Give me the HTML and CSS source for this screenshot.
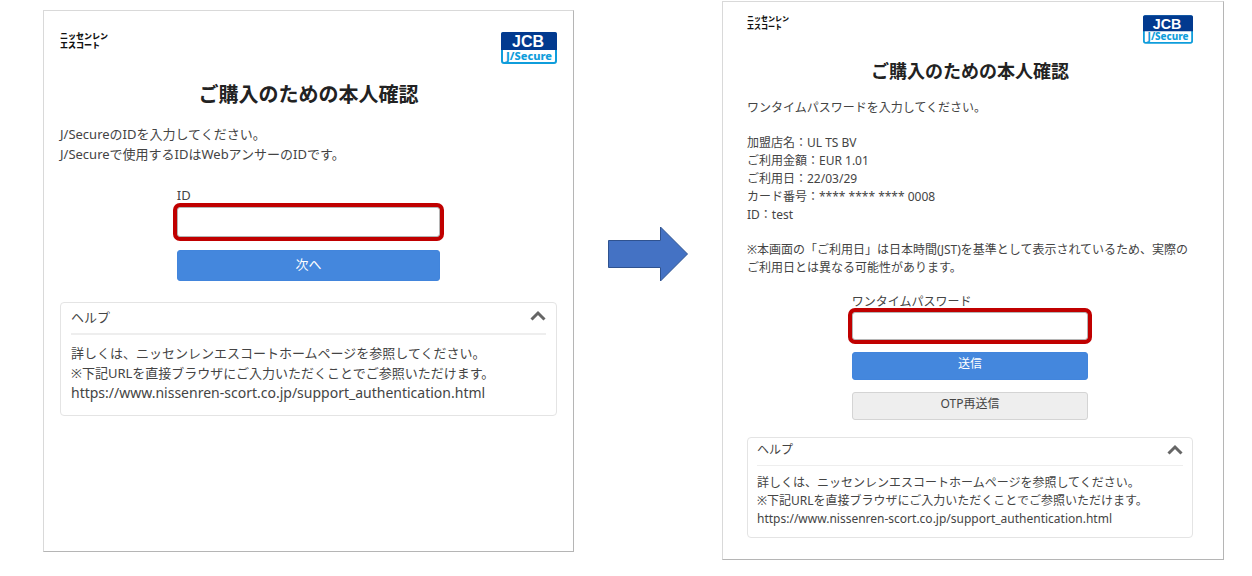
FILE: index.html
```html
<!DOCTYPE html>
<html lang="ja">
<head>
    <meta charset="UTF-8">
    <meta name="viewport" content="width=device-width, initial-scale=1.0">
    <title>ご購入のための本人確認</title>
    <link rel="stylesheet" href="styles.css">
</head>
<body>
    <main class="flow">
        <!-- Step 1: ID -->
        <section class="card">
            <div class="card-header">
                <svg class="brand" viewBox="0 0 48 20" role="img" aria-label="ニッセンレンエスコート">
                    <text x="0" y="7">ニッセンレン</text>
                    <text x="0" y="16">エスコート</text>
                </svg>
                <svg class="jcb" viewBox="0 0 56 32" role="img" aria-label="JCB J/Secure">
                    <rect class="jcb-frame" x="1" y="1" width="54" height="30" rx="2" />
                    <path class="jcb-top" d="M0 18V2a2 2 0 0 1 2-2h52a2 2 0 0 1 2 2v16z" />
                    <text class="jcb-name" x="27" y="15">JCB</text>
                    <text class="jcb-secure" x="28" y="28">J/Secure</text>
                </svg>
            </div>
            <h1>ご購入のための本人確認</h1>
            <p>J/SecureのIDを入力してください。<br>J/Secureで使用するIDはWebアンサーのIDです。</p>
            <form class="form">
                <label for="userId">ID</label>
                <input type="text" id="userId" name="userId">
                <button type="button" class="btn-primary">次へ</button>
            </form>
            <details class="help" open>
                <summary>
                    ヘルプ
                    <svg class="chevron" viewBox="0 0 16 11"><path d="M1.5 9.5L8 3l6.500 6.500" /></svg>
                </summary>
                <div class="help-body">
                    詳しくは、ニッセンレンエスコートホームページを参照してください。<br>
                    ※下記URLを直接ブラウザにご入力いただくことでご参照いただけます。<br>
                    <span class="help-url">https://www.nissenren-scort.co.jp/support_authentication.html</span>
                </div>
            </details>
        </section>

        <svg class="arrow" viewBox="0 0 80 56" aria-hidden="true">
            <path d="M.5 14.500H52.500V1L79.500 28L52.500 55V41.500H.5z" />
        </svg>

        <!-- Step 2: one-time password -->
        <section class="card card-small">
            <div class="card-header">
                <svg class="brand" viewBox="0 0 48 20" role="img" aria-label="ニッセンレンエスコート">
                    <text x="0" y="7">ニッセンレン</text>
                    <text x="0" y="16">エスコート</text>
                </svg>
                <svg class="jcb" viewBox="0 0 56 32" role="img" aria-label="JCB J/Secure">
                    <rect class="jcb-frame" x="1" y="1" width="54" height="30" rx="2" />
                    <path class="jcb-top" d="M0 18V2a2 2 0 0 1 2-2h52a2 2 0 0 1 2 2v16z" />
                    <text class="jcb-name" x="27" y="15">JCB</text>
                    <text class="jcb-secure" x="28" y="28">J/Secure</text>
                </svg>
            </div>
            <h1>ご購入のための本人確認</h1>
            <p>ワンタイムパスワードを入力してください。</p>
            <p>
                加盟店名：UL TS BV<br>
                ご利用金額：EUR 1.01<br>
                ご利用日：22/03/29<br>
                カード番号：**** **** **** 0008<br>
                ID：test
            </p>
            <p>※本画面の「ご利用日」は日本時間(JST)を基準として表示されているため、実際の<br>ご利用日とは異なる可能性があります。</p>
            <form class="form">
                <label for="otp">ワンタイムパスワード</label>
                <input type="text" id="otp" name="otp">
                <button type="button" class="btn-primary">送信</button>
                <button type="button" class="btn-secondary">OTP再送信</button>
            </form>
            <details class="help" open>
                <summary>
                    ヘルプ
                    <svg class="chevron" viewBox="0 0 16 11"><path d="M1.5 9.5L8 3l6.500 6.500" /></svg>
                </summary>
                <div class="help-body">
                    詳しくは、ニッセンレンエスコートホームページを参照してください。<br>
                    ※下記URLを直接ブラウザにご入力いただくことでご参照いただけます。<br>
                    <span class="help-url">https://www.nissenren-scort.co.jp/support_authentication.html</span>
                </div>
            </details>
        </section>
    </main>
</body>
</html>
```
FILE: styles.css
```css
* {
    box-sizing: border-box;
}

body {
    margin: 0;
    background: white;
    color: #444;
    font-family: "Noto Sans", "Noto Sans CJK JP", sans-serif;
}

.flow {
    display: grid;
    grid-template-columns: 531fr 80px 502fr;
    column-gap: 34px;
    align-items: start;
    padding: 1px 28px 16px 43px;
}

.card {
    min-height: 542px;
    margin-top: 9px;
    padding: 21px 16px;
    border: 1px solid #d9d9d9;
    border-right-color: #b5b5b5;
    border-bottom-color: #b5b5b5;
    font-size: 13px;
    line-height: 20px;
}

.card-header {
    display: flex;
    justify-content: space-between;
    align-items: flex-start;
}

.brand {
    width: 48px;
    height: 20px;
    overflow: visible;
    font-size: 8px;
    font-weight: 900;
    fill: #111;
}

.jcb {
    width: 56px;
    height: 32px;
    font-family: "Liberation Sans", sans-serif;
    font-weight: bold;
    text-anchor: middle;
}

.jcb-frame {
    fill: white;
    stroke: #0f9ddb;
    stroke-width: 2;
}

.jcb-top {
    fill: #023a8f;
}

.jcb-name {
    fill: white;
    font-size: 16px;
}

.jcb-secure {
    fill: #0f9ddb;
    font-family: "Noto Sans", sans-serif;
    font-size: 11px;
    font-weight: 800;
}

h1 {
    margin: 19px 0 17px;
    color: #222;
    font-size: 20px;
    font-weight: 600;
    line-height: 24px;
    text-align: center;
}

p {
    margin: 0;
    white-space: nowrap;
}

.form {
    display: flex;
    flex-direction: column;
    width: 53%;
    margin: 21px auto;
}

.form input {
    height: 30px;
    margin: 2px 0 13px;
    padding: 0 8px;
    border: 1px solid #b5b5b5;
    border-radius: 3px;
    outline: none;
    box-shadow: 0 0 0 4px #c00000;
    font: inherit;
}

.form button {
    height: 31px;
    padding: 0 0 4px;
    border: 1px solid #4285dc;
    border-radius: 3px;
    font: inherit;
    cursor: pointer;
}

.form .btn-primary {
    background: #4487dd;
    color: white;
}

.form .btn-secondary {
    margin-top: 12px;
    border-color: #d4d4d4;
    background: #eee;
    color: #444;
}

.arrow {
    width: 80px;
    height: 56px;
    margin-top: 225px;
    fill: #4472c4;
    stroke: #2f528f;
    stroke-width: 1;
}

.help {
    padding: 0 10px 12px;
    border: 1px solid #e4e4e4;
    border-radius: 4px;
}

.help summary {
    display: flex;
    justify-content: space-between;
    padding: 4px 0 6px;
    border-bottom: 2px solid #eee;
    list-style: none;
    cursor: pointer;
}

.chevron {
    width: 16px;
    height: 11px;
    margin-top: 3px;
    fill: none;
    stroke: #666;
    stroke-width: 3;
}

.help-body {
    padding-top: 8px;
    white-space: nowrap;
}

.help-url {
    font-size: 14px;
}

/* One-time password screen is shown a little smaller */
.card-small {
    min-height: 0;
    margin-top: 0;
    padding: 13px 30px 21px 24px;
    font-size: 12px;
    line-height: 18px;
}

.card-small .brand {
    width: 42px;
    height: 18px;
}

.card-small .jcb {
    width: 50px;
    height: 29px;
}

.card-small h1 {
    margin: 16px 0 17px;
    font-size: 18px;
    line-height: 22px;
}

.card-small p + p {
    margin-top: 17px;
}

.card-small .form {
    margin: 16px auto 17px;
}

.card-small .form input {
    height: 28px;
    margin: 1px 0 12px;
}

.card-small .form button {
    height: 28px;
}

.card-small .help {
    padding: 0 9px 9px;
}

.card-small .help summary {
    padding: 3px 0 6px;
    border-bottom-width: 1px;
}

.card-small .help-url {
    font-size: 12px;
}
```
